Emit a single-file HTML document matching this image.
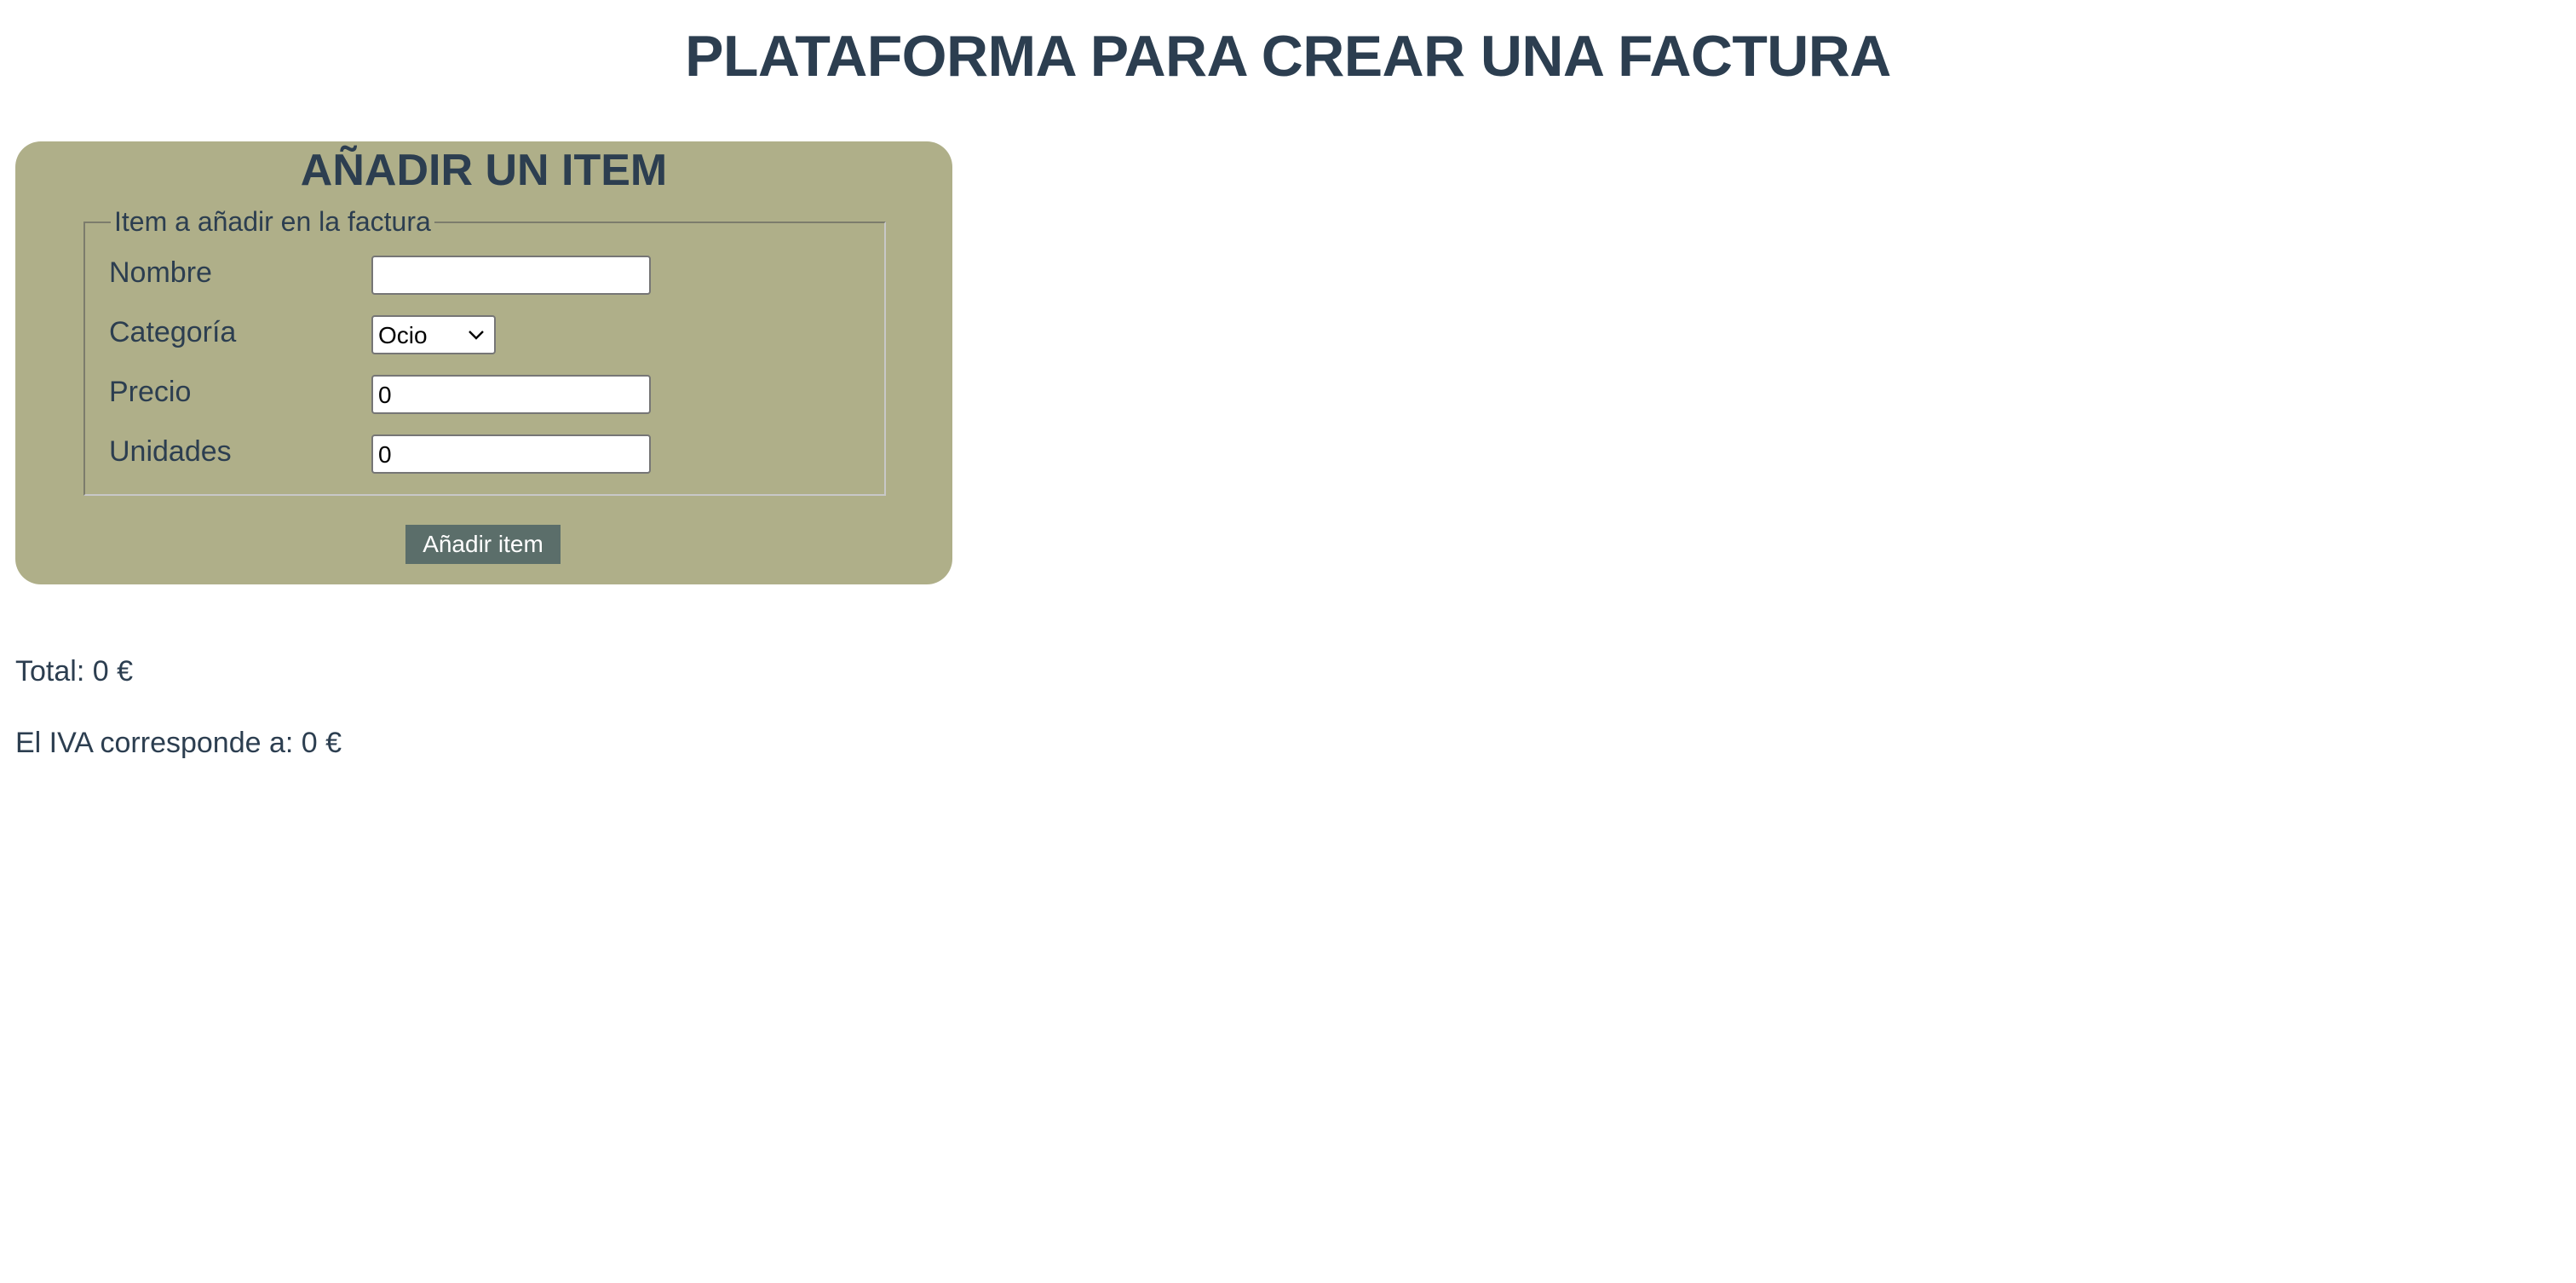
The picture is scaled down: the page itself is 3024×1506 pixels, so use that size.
<!DOCTYPE html>
<html><head><meta charset="utf-8"><style>
html,body{margin:0;padding:0;background:#fff;}
body{width:1512px;height:753px;zoom:2;position:relative;overflow:hidden;font-family:"Liberation Sans",sans-serif;color:#2c3e50;}
.a{position:absolute;white-space:nowrap;}
h1{position:absolute;left:0;width:1512px;top:13px;margin:0;text-align:center;font-size:34px;font-weight:bold;line-height:40px;letter-spacing:-0.3px;}
.box{position:absolute;left:9px;top:83px;width:550px;height:260px;background:#afaf89;border-radius:15px;}
h2{position:absolute;left:9px;width:550px;top:84px;margin:0;text-align:center;font-size:26px;line-height:32px;font-weight:bold;}
.fs{position:absolute;left:49px;top:130px;width:469px;height:159px;border:1px solid #7c7c6c;border-bottom-color:#c8c8c8;border-right-color:#c8c8c8;}
.lg{position:absolute;left:65px;top:121px;background:#afaf89;padding:0 2px;font-size:16px;line-height:18px;}
.lb{font-size:17px;line-height:20px;left:64px;}
.in{position:absolute;left:218px;width:164px;height:23px;background:#fff;border:1px solid #767676;border-radius:2px;font-size:14px;line-height:22px;color:#000;padding-left:3px;box-sizing:border-box;}
.btn{position:absolute;left:238px;top:308px;width:91px;height:23px;background:#5b6e6a;color:#fff;font-size:14px;line-height:23px;text-align:center;}
.t{left:9px;font-size:17px;line-height:20px;}
</style></head><body>
<h1>PLATAFORMA PARA CREAR UNA FACTURA</h1>
<div class="box"></div>
<h2>AÑADIR UN ITEM</h2>
<div class="fs"></div>
<div class="a lg">Item a añadir en la factura</div>
<div class="a lb" style="top:150px">Nombre</div>
<div class="a lb" style="top:185px">Categoría</div>
<div class="a lb" style="top:220px">Precio</div>
<div class="a lb" style="top:255px">Unidades</div>
<div class="in" style="top:150px"></div>
<div class="in" style="top:185px;width:73px">Ocio<svg style="position:absolute;right:6px;top:8px" width="9" height="6" viewBox="0 0 9 6"><path d="M0.5 0.5L4.5 4.5L8.5 0.5" fill="none" stroke="#000" stroke-width="1.2"/></svg></div>
<div class="in" style="top:220px">0</div>
<div class="in" style="top:255px">0</div>
<div class="btn">Añadir item</div>
<div class="a t" style="top:384px">Total: 0 €</div>
<div class="a t" style="top:426px">El IVA corresponde a: 0 €</div>
</body></html>
